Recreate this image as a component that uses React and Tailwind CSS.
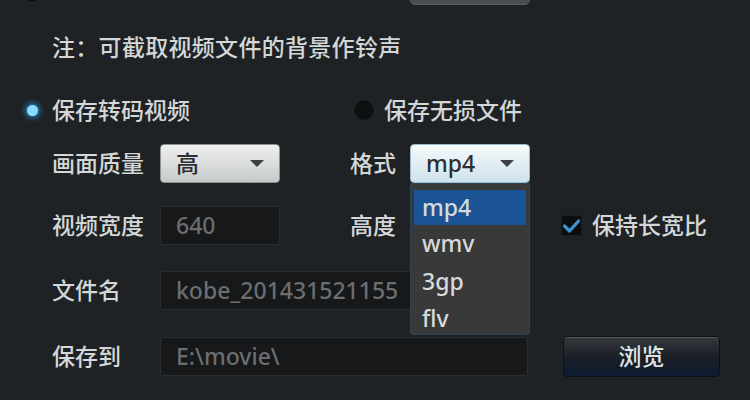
import React from "react";

const font = {
  fontFamily: '"Noto Sans", "Noto Sans CJK SC", sans-serif',
};

function Caret() {
  return (
    <svg width="16" height="9" viewBox="0 0 16 9" className="shrink-0">
      <path d="M1 1 L15 1 L8 8 Z" fill="#3c4044" />
    </svg>
  );
}

function Select({ value, tone }) {
  const bg =
    tone === "blue"
      ? "bg-gradient-to-b from-[#f6f9fb] to-[#cfe2ec] border-[#9fb8c8]"
      : "bg-gradient-to-b from-[#eef0ef] to-[#c6cac9] border-[#8e9292]";
  return (
    <div
      className={`w-[120px] h-[39px] rounded-[4px] border flex items-center justify-between pl-[15px] pr-[14px] text-[#2c2f31] ${bg}`}>
      <span>{value}</span>
      <Caret />
    </div>
  );
}

function Field({ value, className = "" }) {
  return (
    <div
      className={`h-[39px] rounded-[3px] bg-[#161819] border border-[#2a2d2f] flex items-center pl-[15px] text-[#6b6e70] overflow-hidden whitespace-nowrap ${className}`}>
      {value}
    </div>
  );
}

export default function App() {
  return (
    <div
      style={font}
      className="relative w-[750px] h-[400px] overflow-hidden bg-[#1f2224] text-[23px] leading-none font-medium text-[#d3d7d7]">
      {/* clipped row above */}
      <div className="flex items-end h-[40px] -mt-[35px]">
        <div className="ml-[22px] w-[20px] h-[20px] rounded-full bg-[#0f1112] border border-[#2a2d2f] mb-[2px]" />
        <div className="ml-[368px] w-[120px] h-[40px] rounded-[5px] bg-[#4b4e50] border border-[#5a5d5f]" />
      </div>

      {/* note */}
      <div className="pl-[52px] mt-[25px] h-[34px] flex items-center tracking-[0.3px]">
        注：可截取视频文件的背景作铃声
      </div>

      {/* radios */}
      <div className="flex items-center h-[40px] mt-[26px]">
        <div className="ml-[24px] w-[17px] h-[17px] rounded-full bg-[#0c1418] flex items-center justify-center">
          <div className="w-[11px] h-[11px] rounded-full bg-[#8adcff] shadow-[0_0_5px_2px_rgba(60,170,240,0.8)]" />
        </div>
        <span className="ml-[11px] w-[140px]">保存转码视频</span>
        <div className="ml-[161px] w-[22px] h-[22px] rounded-full bg-[#0d0f10] border border-[#25282a]" />
        <span className="ml-[9px]">保存无损文件</span>
      </div>

      {/* quality / format */}
      <div className="flex items-center mt-[14px]">
        <span className="ml-[52px] w-[108px]">画面质量</span>
        <Select value="高" />
        <span className="ml-[70px] w-[60px]">格式</span>
        <Select value="mp4" tone="blue" />
      </div>

      {/* width / height */}
      <div className="flex items-center mt-[23px]">
        <span className="ml-[52px] w-[108px]">视频宽度</span>
        <Field value="640" className="w-[120px]" />
        <span className="ml-[70px] w-[60px]">高度</span>
        <Field value="" className="w-[120px]" />
        <div className="ml-[31px] w-[21px] h-[21px] bg-[#0b0d0f] border border-[#1a1d20] flex items-center justify-center">
          <svg width="19" height="16" viewBox="0 0 19 16">
            <path
              d="M2.5 8 L7.5 13 L16.5 3"
              fill="none"
              stroke="#3d92d4"
              strokeWidth="3.2"
              strokeLinecap="round"
              strokeLinejoin="round"
            />
          </svg>
        </div>
        <span className="ml-[10px]">保持长宽比</span>
      </div>

      {/* file name */}
      <div className="flex items-center mt-[26px]">
        <span className="ml-[52px] w-[108px]">文件名</span>
        <Field value="kobe_201431521155" className="w-[370px]" />
      </div>

      {/* save to */}
      <div className="flex items-center mt-[26px]">
        <span className="ml-[52px] w-[108px]">保存到</span>
        <Field value="E:\movie\" className="w-[368px]" />
        <button className="ml-[35px] w-[157px] h-[41px] rounded-[4px] border border-[#0d0f11] bg-gradient-to-b from-[#363a3f] via-[#1b1f26] to-[#0c1a33] shadow-[inset_0_1px_0_rgba(255,255,255,0.15)] text-[#dfe3e6] text-[23px]">
          浏览
        </button>
      </div>

      {/* open format list */}
      <div className="absolute left-[410px] top-[183px] w-[120px] h-[152px] bg-[#39393a] border border-[#2b4459] rounded-b-[3px] px-[3px] pt-[6px] flex flex-col text-[#d7dadb]">
        <div className="h-[36px] bg-[#1b5495] flex items-center pl-[8px]">mp4</div>
        <div className="h-[38px] flex items-center pl-[8px]">wmv</div>
        <div className="h-[39px] flex items-center pl-[8px]">3gp</div>
        <div className="h-[34px] flex items-center pl-[8px] pt-[2px]">flv</div>
      </div>
    </div>
  );
}
